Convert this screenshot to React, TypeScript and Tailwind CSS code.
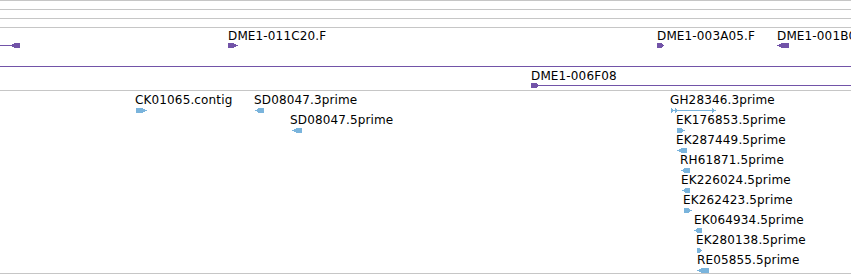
import React from "react";

type Dir = "r" | "l";

const PURPLE = "#7253a8";
const BLUE = "#7ab4dc";

function Arrow({ w, dir, color }: { w: number; dir: Dir; color: string }) {
  const t = Math.max(2, Math.round(w * 0.45));
  const pts =
    dir === "r"
      ? `0,0 ${w - t},0 ${w},2.5 ${w - t},5 0,5`
      : `${w},0 ${t},0 0,2.5 ${t},5 ${w},5`;
  return (
    <svg className="block" width={w} height={5} viewBox={`0 0 ${w} 5`} shapeRendering="crispEdges">
      <polygon points={pts} fill={color} />
    </svg>
  );
}

function Text({ children }: { children: React.ReactNode }) {
  return (
    <span
      className="whitespace-nowrap text-[12px] leading-[14px] tracking-[0.14px] text-black"
      style={{ fontFamily: '"DejaVu Sans", sans-serif' }}
    >
      {children}
    </span>
  );
}

function Feature({
  x,
  y,
  label,
  dx,
  gap,
  children,
}: {
  x: number;
  y: number;
  label: string;
  dx: number;
  gap: number;
  children: React.ReactNode;
}) {
  return (
    <div className="absolute flex flex-col items-start" style={{ left: x, top: y }}>
      <Text>{label}</Text>
      <div style={{ marginLeft: dx, marginTop: gap }}>{children}</div>
    </div>
  );
}

type Est = { label: string; lx: number; gx: number; w: number; dir: Dir; row: number };

const ests: Est[] = [
  { label: "CK01065.contig", lx: 135, gx: 136, w: 11, dir: "r", row: 0 },
  { label: "SD08047.3prime", lx: 254, gx: 255, w: 9, dir: "l", row: 0 },
  { label: "SD08047.5prime", lx: 290, gx: 292, w: 10, dir: "l", row: 1 },
  { label: "EK176853.5prime", lx: 676, gx: 677, w: 8, dir: "r", row: 1 },
  { label: "EK287449.5prime", lx: 676, gx: 677, w: 10, dir: "l", row: 2 },
  { label: "RH61871.5prime", lx: 680, gx: 681, w: 9, dir: "l", row: 3 },
  { label: "EK226024.5prime", lx: 681, gx: 682, w: 8, dir: "l", row: 4 },
  { label: "EK262423.5prime", lx: 683, gx: 684, w: 8, dir: "r", row: 5 },
  { label: "EK064934.5prime", lx: 694, gx: 694, w: 8, dir: "l", row: 6 },
  { label: "EK280138.5prime", lx: 696, gx: 697, w: 5, dir: "r", row: 7 },
  { label: "RE05855.5prime", lx: 697, gx: 697, w: 12, dir: "l", row: 8 },
];

export default function App() {
  return (
    <div className="w-[851px] h-[275px] overflow-hidden bg-white">
      <div className="h-[9px] border-t border-[#c6c6c6]" />
      <div className="h-[9px] border-t border-[#c6c6c6]" />
      <div className="h-[9px] border-t border-[#c6c6c6]" />

      {/* clone track */}
      <div className="relative h-[63px] border-t border-[#c6c6c6] overflow-hidden">
        {/* left feature, partly off screen */}
        <div className="absolute left-0 top-[15px] flex items-center">
          <div className="h-px w-[11px]" style={{ background: PURPLE }} />
          <div className="-ml-px">
            <Arrow w={10} dir="l" color={PURPLE} />
          </div>
        </div>

        <Feature x={228} y={1} label="DME1-011C20.F" dx={0} gap={0}>
          <Arrow w={10} dir="r" color={PURPLE} />
        </Feature>
        <Feature x={657} y={1} label="DME1-003A05.F" dx={0} gap={0}>
          <Arrow w={7} dir="r" color={PURPLE} />
        </Feature>
        <Feature x={777} y={1} label="DME1-001B06.F" dx={0} gap={0}>
          <Arrow w={12} dir="l" color={PURPLE} />
        </Feature>

        <div className="absolute left-0 right-0 top-[38px] h-px" style={{ background: PURPLE }} />

        <div className="absolute left-[531px] right-0 top-[41px] flex flex-col">
          <Text>DME1-006F08</Text>
          <div className="flex items-center">
            <Arrow w={9} dir="r" color={PURPLE} />
            <div className="h-px flex-1" style={{ background: PURPLE }} />
          </div>
        </div>
      </div>

      {/* EST track */}
      <div className="relative h-[184px] border-y border-[#c6c6c6] overflow-hidden">
        <Feature x={670} y={2} label="GH28346.3prime" dx={0} gap={0}>
          <svg className="block" width={47} height={7} viewBox="0 0 47 7" shapeRendering="crispEdges">
            <polygon points="1,1 5,3.5 1,6" fill={BLUE} />
            <polygon points="5,1 9,3.5 5,6" fill={BLUE} />
            <rect x={1} y={3} width={44} height={1} fill={BLUE} />
            <polygon points="42,1 46,3.5 42,6" fill={BLUE} />
          </svg>
        </Feature>

        {ests.map((e) => (
          <Feature
            key={e.label}
            x={e.lx}
            y={2 + e.row * 20}
            label={e.label}
            dx={e.gx - e.lx}
            gap={1}
          >
            <Arrow w={e.w} dir={e.dir} color={BLUE} />
          </Feature>
        ))}
      </div>
    </div>
  );
}
